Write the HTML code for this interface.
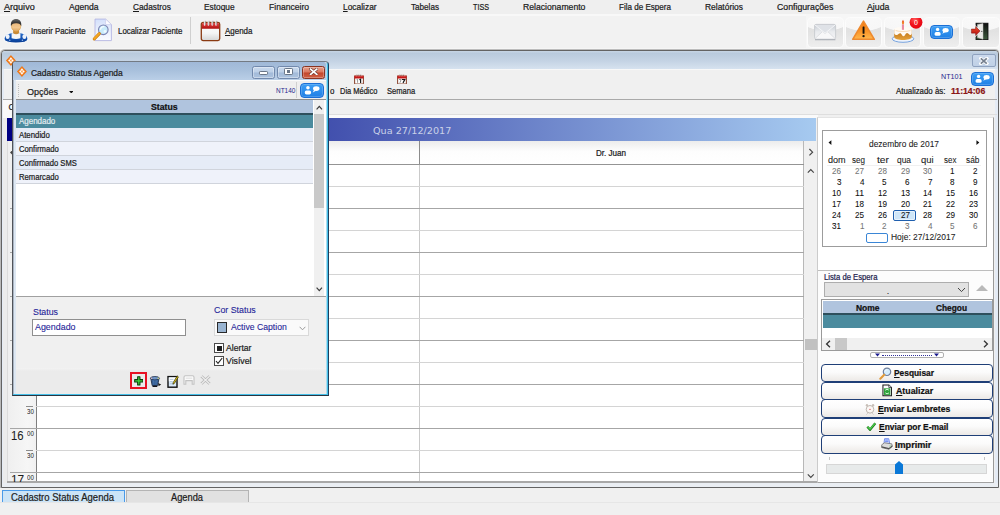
<!DOCTYPE html>
<html lang="pt-BR"><head><meta charset="utf-8"><title>Cadastro Status Agenda</title>
<style>
html,body{margin:0;padding:0}
body{width:1000px;height:515px;overflow:hidden;background:#f0f0f0;position:relative;font-family:"Liberation Sans",sans-serif;color:#1c1c1c}
div,span.t,svg,i{position:absolute;display:block;box-sizing:border-box}
.t{-webkit-text-stroke:0.22px currentColor;white-space:nowrap;line-height:12px;font-size:8px;transform-origin:0 0}
u{text-decoration:underline;text-underline-offset:1px;text-decoration-thickness:0.7px}
.hl{height:1px;left:36px;width:768px;background:#d4d4d4}
.hd{height:1px;left:36px;width:768px;background:#a6a6a6}
.tb{width:37px;height:31px;top:16.5px;border-radius:4.5px;background:radial-gradient(ellipse 90% 75% at 50% -30%,#fafafa 0%,#f7f7f7 97%,rgba(247,247,247,0) 100%),linear-gradient(#e6e6e6 0%,#e2e2e2 45%,#eeeeee 100%);border:1px solid #fcfcfc}
.chat{background:linear-gradient(#3d9ef4,#1f80e6);border:1px solid #1a6fd6;border-radius:4px;box-shadow:inset 0 0 0 1px rgba(255,255,255,.18)}
.row{left:16px;width:297px;height:14px;border-bottom:1px solid #d0d4dc}
.btn{left:821px;width:172px;border:1px solid #1f3f77;border-radius:4px;background:linear-gradient(#ffffff 0%,#fbfbfb 45%,#ece9e6 100%)}
.cb{width:10px;height:10px;left:214px;background:#fff;border:1px solid #4a4a4a}

</style></head>
<body>
<!-- menu / toolbar strips -->
<div style="left:0;top:0;width:1000px;height:15px;background:#efefef"></div>
<div style="left:0;top:15px;width:1000px;height:34px;background:#f2f2f2"></div>
<div style="left:0;top:14px;width:1000px;height:2px;background:#f8f8f8"></div>
<div style="left:0;top:47.5px;width:1000px;height:2px;background:#f6f6f6"></div>
<div style="left:190px;top:17px;width:1px;height:27px;background:#cfcfcf"></div>

<!-- toolbar icon: person -->
<svg style="left:3px;top:18px" width="26" height="26" viewBox="0 0 26 26">
 <defs>
  <linearGradient id="gskin" x1="0" y1="0" x2="0" y2="1"><stop offset="0" stop-color="#e9b477"/><stop offset=".6" stop-color="#f1c78f"/><stop offset="1" stop-color="#dba45e"/></linearGradient>
  <linearGradient id="gblue" x1="0" y1="0" x2="0" y2="1"><stop offset="0" stop-color="#2a6cc8"/><stop offset=".55" stop-color="#1252b2"/><stop offset="1" stop-color="#093a8e"/></linearGradient>
  <linearGradient id="ghair" x1="0" y1="0" x2="0" y2="1"><stop offset="0" stop-color="#6a6a6a"/><stop offset=".5" stop-color="#3a3a3a"/><stop offset="1" stop-color="#2a2622"/></linearGradient>
 </defs>
 <path d="M1 21 C1 17.2 4 15.3 8.2 14.8 L17.8 14.8 C22 15.3 25 17.2 25 21 C25 23.8 20 25.1 13 25.1 C6 25.1 1 23.8 1 21Z" fill="url(#gblue)" stroke="#fbfbfb" stroke-width="1.1"/>
 <ellipse cx="4.6" cy="18.6" rx="2" ry="2.5" fill="#edf2fa"/><ellipse cx="21.4" cy="18.6" rx="2" ry="2.5" fill="#edf2fa"/>
 <path d="M8.6 15.2 L17.4 15.2 L17.4 20.2 Q13 21.6 8.6 20.2Z" fill="#f6f6f6"/>
 <circle cx="6.8" cy="22.2" r=".7" fill="#9fc0ee"/><circle cx="19.4" cy="22.2" r=".7" fill="#9fc0ee"/>
 <path d="M10.4 11.6 L15.8 11.6 L16.2 15 Q13.1 17.6 10 15Z" fill="#c98b36"/>
 <path d="M8.5 8.4 C8.5 4.8 10.4 3.6 13.1 3.6 C15.8 3.6 17.7 4.8 17.7 8.4 C17.7 11.2 15.6 13.4 13.1 13.4 C10.6 13.4 8.5 11.2 8.5 8.4Z" fill="url(#gskin)" stroke="#d9952f" stroke-width=".5"/>
 <path d="M8 8.2 C7.2 3.2 10 .9 13.1 .9 C16.2 .9 19 3.2 18.2 8.2 C17.6 6.2 16.4 5.2 13.1 5.2 C9.8 5.2 8.6 6.2 8 8.2Z" fill="url(#ghair)"/>
</svg>
<!-- toolbar icon: doc + magnifier -->
<svg style="left:92px;top:18px" width="22" height="24" viewBox="0 0 22 24">
 <defs><linearGradient id="gdoc" x1="0" y1="0" x2="0" y2="1"><stop offset="0" stop-color="#d3e0fb"/><stop offset=".6" stop-color="#edf2fd"/><stop offset="1" stop-color="#fbfcff"/></linearGradient></defs>
 <path d="M3 1.1 L13.6 1.1 L19.4 6.6 L19.4 22.6 L3 22.6Z" fill="url(#gdoc)" stroke="#b4b6e2" stroke-width=".9"/>
 <path d="M13.6 1.1 L13.6 6.6 L19.4 6.6Z" fill="#fdfdff" stroke="#c4c6e6" stroke-width=".6"/>
 <circle cx="11.3" cy="11.8" r="4.8" fill="#c9ecfb" stroke="#7d83b2" stroke-width="1.1"/>
 <path d="M8.6 11.2 C8.8 9.4 10.2 8.4 11.8 8.6" fill="none" stroke="#f6fdff" stroke-width="1.3" stroke-linecap="round"/>
 <circle cx="13" cy="13.4" r="1.4" fill="#eefaff"/>
 <path d="M7.4 15.6 L2.2 21" stroke="#c87a10" stroke-width="3" stroke-linecap="round"/>
 <path d="M7.2 15.6 L2.3 20.7" stroke="#f4a722" stroke-width="2" stroke-linecap="round"/>
</svg>
<!-- toolbar icon: agenda calendar -->
<svg style="left:200px;top:18px" width="21" height="24" viewBox="0 0 21 24">
 <defs><linearGradient id="gred" x1="0" y1="0" x2="0" y2="1"><stop offset="0" stop-color="#e24a4a"/><stop offset="1" stop-color="#b00e0e"/></linearGradient>
 <linearGradient id="gpap" x1="0" y1="0" x2="0" y2="1"><stop offset="0" stop-color="#ffffff"/><stop offset=".6" stop-color="#f4f4f4"/><stop offset="1" stop-color="#d4d4d4"/></linearGradient></defs>
 <rect x="1.3" y="4.4" width="18.4" height="18.2" rx="1.8" fill="url(#gpap)" stroke="#8a3a12" stroke-width="1.3"/>
 <path d="M1.9 6 Q1.9 5 2.9 5 L18.1 5 Q19.1 5 19.1 6 L19.1 10.8 L1.9 10.8Z" fill="url(#gred)"/>
 <g stroke="#f2f2f2" stroke-width="1.5" stroke-linecap="round"><path d="M4.6 2.6v4.4M8.4 2.6v4.4M12.2 2.6v4.4M16 2.6v4.4"/></g>
 <g stroke="#8e8e8e" stroke-width=".7"><path d="M5.3 2.8v4.2M9.1 2.8v4.2M12.9 2.8v4.2M16.7 2.8v4.2"/></g>
</svg>

<!-- right toolbar buttons -->
<div style="left:805.5px;top:14px;width:195px;height:34.5px;background:#f6f6f6"></div>
<div class="tb" style="left:807px"></div>
<div class="tb" style="left:845px"></div>
<div class="tb" style="left:884px"></div>
<div class="tb" style="left:923px"></div>
<div class="tb" style="left:962px;width:38px"></div>
<!-- envelope -->
<svg style="left:813px;top:23px" width="24" height="18" viewBox="0 0 24 18">
 <defs><linearGradient id="genv" x1="0" y1="0" x2="0" y2="1"><stop offset="0" stop-color="#c4c9d1"/><stop offset=".5" stop-color="#e9ebee"/><stop offset="1" stop-color="#f4f5f6"/></linearGradient></defs>
 <rect x="1.6" y="1.4" width="21" height="14.6" rx="1.4" fill="url(#genv)" stroke="#c6c9ce" stroke-width=".9"/>
 <path d="M2 15.6 L9.4 8.6 L12.1 10.6 L14.8 8.6 L22.2 15.6" fill="#f8f8f9" stroke="#d2d4d8" stroke-width=".7"/>
 <path d="M1.9 1.9 L12.1 10.2 L22.3 1.9" fill="#dfe2e7" stroke="#f6f7f8" stroke-width=".9"/>
 <path d="M2 16.7 H22.4" stroke="#a9adb4" stroke-width="1.1"/>
</svg>
<!-- warning -->
<svg style="left:851px;top:19px" width="25" height="22" viewBox="0 0 25 22">
 <defs><linearGradient id="gw" x1="0" y1="0" x2="0" y2="1"><stop offset="0" stop-color="#f47a12"/><stop offset=".55" stop-color="#fb9426"/><stop offset="1" stop-color="#ffb84e"/></linearGradient></defs>
 <path d="M12.5 2.2 L23.3 20.3 L1.7 20.3Z" fill="url(#gw)" stroke="#ee8a2e" stroke-width="1.6" stroke-linejoin="round"/>
 <rect x="11.6" y="7.6" width="1.9" height="7.2" rx=".5" fill="#16120c"/><circle cx="12.55" cy="17.2" r="1.15" fill="#16120c"/>
</svg>
<!-- cake -->
<svg style="left:891px;top:18px" width="32" height="26" viewBox="0 0 32 26">
 <defs><linearGradient id="gck" x1="0" y1="0" x2="0" y2="1"><stop offset="0" stop-color="#b8690f"/><stop offset="1" stop-color="#e5a23a"/></linearGradient>
 <radialGradient id="gbd" cx=".4" cy=".3" r=".8"><stop offset="0" stop-color="#ff5a5a"/><stop offset=".5" stop-color="#f2121e"/><stop offset="1" stop-color="#e0000c"/></radialGradient></defs>
 <ellipse cx="12" cy="20.8" rx="10.8" ry="3.5" fill="#eef3fb" stroke="#6c9cdc" stroke-width=".9"/>
 <path d="M3.2 11.4 L3.2 19 C3.2 23 20.8 23 20.8 19 L20.8 11.4Z" fill="url(#gck)"/>
 <path d="M3.2 11.2 C3.2 8.2 20.8 8.2 20.8 11.2 L20.8 15.4 C20 17.4 18.6 17.6 17.2 15.6 C16 14.4 15 15.2 14 17 C13.2 18.6 11.8 18.6 11 17 C10 15 9 14.6 7.8 15.8 C6.4 17.4 4.6 17.6 3.2 15.4Z" fill="#fffaf3"/>
 <path d="M4.6 12.6 C8 13.8 16 13.8 19.4 12.6" fill="none" stroke="#f9dcb8" stroke-width="1.1"/>
 <rect x="10.9" y="6.4" width="2.1" height="5.4" fill="#ea8ba2"/>
 <path d="M12 1.8 C13.6 3.8 13.4 6.2 12 6.6 C10.6 6.2 10.4 3.8 12 1.8Z" fill="#ee5a1e"/><path d="M12 3.8 C12.7 4.8 12.6 6 12 6.3 C11.4 6 11.3 4.8 12 3.8Z" fill="#fbc23a"/>
 <circle cx="25" cy="4.3" r="6.4" fill="url(#gbd)"/>
</svg>
<!-- chat (toolbar) -->
<div class="chat" style="left:930px;top:25px;width:23px;height:14px"></div>
<svg style="left:930px;top:25px" width="23" height="14" viewBox="0 0 23 14">
 <circle cx="7.6" cy="4.4" r="1.7" fill="#fff"/><rect x="4.6" y="6.9" width="6" height="3.9" rx="1.6" fill="#fff"/>
 <ellipse cx="15.6" cy="5.2" rx="3.1" ry="2.2" fill="#fff"/><path d="M13.6 6.4 L12.2 8.8 L15.2 7.2Z" fill="#fff"/>
</svg>
<!-- exit door -->
<svg style="left:970px;top:22px" width="20" height="19" viewBox="0 0 20 19">
 <defs><linearGradient id="gdoor" x1="0" y1="0" x2="0" y2="1"><stop offset="0" stop-color="#101010"/><stop offset="1" stop-color="#3c5a3c"/></linearGradient>
 <linearGradient id="garr" x1="0" y1="0" x2="0" y2="1"><stop offset="0" stop-color="#f04a2a"/><stop offset="1" stop-color="#b01010"/></linearGradient></defs>
 <rect x="6" y="1.2" width="12" height="16.4" fill="url(#gdoor)" stroke="#0a0a0a" stroke-width=".8"/>
 <path d="M7.4 2.4 L13 1.6 L13 17.2 L7.4 15.6Z" fill="#e9e9e6" stroke="#bdbdb8" stroke-width=".5"/>
 <circle cx="11.8" cy="9.4" r=".6" fill="#444"/>
 <path d="M1.4 7 L5.6 7 L5.6 4.6 L10.2 9.1 L5.6 13.6 L5.6 11.2 L1.4 11.2Z" fill="url(#garr)" stroke="#fff" stroke-width="1.4" paint-order="stroke"/>
 <path d="M1.4 7 L5.6 7 L5.6 4.6 L10.2 9.1 L5.6 13.6 L5.6 11.2 L1.4 11.2Z" fill="none" stroke="#6a0c0c" stroke-width=".5"/>
</svg>

<!-- MDI frame -->
<div style="left:1px;top:50px;width:998px;height:438px;border:1px solid #636363;border-radius:4px 4px 0 0;background:#f0f0f0;box-shadow:0 -1px 0 0 #bdbdbd,-1px 0 0 0 #b9b9b9,inset 0 -1px 0 0 #c9c9c9, inset -1px 0 0 0 #d4d4d4">
</div>
<!-- Agenda child window -->
<div style="left:2px;top:51px;width:996px;height:18px;background:linear-gradient(#c7d5e5 0,#b9cadd 14%,#c4d3e4 55%,#d6e2ef 100%);border-radius:3px 3px 0 0"></div>
<div style="left:4px;top:69px;width:991px;height:1px;background:#f8f8f8"></div>
<div style="left:2px;top:69px;width:2px;height:418px;background:#e4ebf5"></div>
<div style="left:995px;top:69px;width:3px;height:418px;background:#e4ebf5"></div>
<div style="left:3px;top:99px;width:994px;height:1px;background:#a9a9a9"></div>
<div style="left:3px;top:114px;width:994px;height:1px;background:#dedede"></div>
<div style="left:4px;top:115px;width:814px;height:3px;background:#fafafa"></div>
<div style="left:3px;top:100px;width:10px;height:18px;background:#f9f9f9"></div>
<!-- agenda window icon -->
<svg style="left:6.1px;top:54.9px" width="9.8" height="11" viewBox="0 0 10 11">
 <path d="M5 .7 L9.4 5.5 L5 10.3 L.6 5.5Z" fill="#f58a30" stroke="#ee7414" stroke-width="1.1" stroke-linejoin="round"/>
 <path d="M5 2.2 L6.3 3.9 L5 5 L3.7 3.9Z M5 8.8 L6.3 7.1 L5 6 L3.7 7.1Z M2.2 5.5 L3.5 4.3 L4.5 5.5 L3.5 6.7Z M7.8 5.5 L6.5 4.3 L5.5 5.5 L6.5 6.7Z" fill="#fff"/>
</svg>
<!-- agenda close button -->
<div style="left:972px;top:54px;width:24px;height:13px;border:1px solid #8fa2bf;border-radius:2px;background:linear-gradient(#cbd9ec,#bfd0e6)"></div>
<svg style="left:979.2px;top:56.6px" width="9.6" height="8" viewBox="0 0 9.6 8">
 <path d="M1.8 1.4 L7.8 6.6 M7.8 1.4 L1.8 6.6" stroke="#fdfdfd" stroke-width="3.3" stroke-linecap="square"/>
 <path d="M1.8 1.4 L7.8 6.6 M7.8 1.4 L1.8 6.6" stroke="#76808f" stroke-width="1.7" stroke-linecap="butt"/>
</svg>
<!-- agenda toolbar chat icon -->
<div class="chat" style="left:971px;top:72px;width:23px;height:14px"></div>
<svg style="left:971px;top:72px" width="23" height="14" viewBox="0 0 23 14">
 <circle cx="7.6" cy="4.4" r="1.7" fill="#fff"/><rect x="4.6" y="6.9" width="6" height="3.9" rx="1.6" fill="#fff"/>
 <ellipse cx="15.6" cy="5.2" rx="3.1" ry="2.2" fill="#fff"/><path d="M13.6 6.4 L12.2 8.8 L15.2 7.2Z" fill="#fff"/>
</svg>
<!-- small calendar icons: Dia Medico, Semana -->
<svg style="left:354px;top:73.6px" width="10" height="10.6" viewBox="0 0 10 10.6">
 <rect x=".6" y="1.8" width="8.8" height="8.2" rx=".8" fill="#ffffff" stroke="#8c4a36" stroke-width="1.1"/><rect x=".5" y="1.6" width="9" height="2.9" fill="#c61616"/>
 <path d="M2.2 .4 v2 M4.1 .4 v2 M6 .4 v2 M7.9 .4 v2" stroke="#f2e6e0" stroke-width=".9"/><path d="M2.9 .6 v1.4 M4.8 .6 v1.4 M6.7 .6 v1.4" stroke="#5a2a20" stroke-width=".5"/>
 <path d="M2.6 5.6 L3.6 5.2 L3.6 8.8" fill="none" stroke="#8a8a8a" stroke-width=".9"/><path d="M5.4 5.8 L6.6 5.2 L6.6 8.9" fill="none" stroke="#1a1a1a" stroke-width="1.2"/>
</svg>
<svg style="left:397px;top:73.6px" width="10" height="10.6" viewBox="0 0 10 10.6">
 <rect x=".6" y="1.8" width="8.8" height="8.2" rx=".8" fill="#ffffff" stroke="#8c4a36" stroke-width="1.1"/><rect x=".5" y="1.6" width="9" height="2.9" fill="#c61616"/>
 <path d="M2.2 .4 v2 M4.1 .4 v2 M6 .4 v2 M7.9 .4 v2" stroke="#f2e6e0" stroke-width=".9"/><path d="M2.9 .6 v1.4 M4.8 .6 v1.4 M6.7 .6 v1.4" stroke="#5a2a20" stroke-width=".5"/>
 <path d="M2 5.5 L4.2 5.5 L2.9 8.8" fill="none" stroke="#8a8a8a" stroke-width=".9"/><path d="M5 5.5 L7.8 5.5 L6 8.9" fill="none" stroke="#1a1a1a" stroke-width="1.2"/>
</svg>

<!-- agenda left gutter -->
<div style="left:3px;top:118px;width:4px;height:365px;background:#ececec"></div>
<!-- date header -->
<div style="left:7px;top:118px;width:809px;height:23px;background:linear-gradient(90deg,#000082,#a6caf0)"></div>
<!-- grid body -->
<div style="left:7px;top:141px;width:797px;height:341px;background:#fff"></div>
<!-- doctor header -->
<div style="left:36px;top:141px;width:768px;height:23px;background:linear-gradient(#ececec,#fdfdfd 45%,#fff)"></div>
<!-- time column -->
<div style="left:7px;top:141px;width:29px;height:341px;background:linear-gradient(90deg,#efefef,#f6f6f6 70%,#f1f1f1);border-left:1px solid #dcdcdc"></div>
<div style="left:36px;top:141px;width:1px;height:341px;background:#7e7e7e"></div>
<div style="left:419px;top:141px;width:1px;height:341px;background:linear-gradient(#8c8c8c 0,#8c8c8c 23px,#cacaca 23px)"></div>
<div style="left:803px;top:141px;width:1px;height:341px;background:#b8b8b8"></div>
<svg style="left:9.6px;top:150px" width="2.6" height="5" viewBox="0 0 2.6 5"><path d="M2.6 0 L0 2.5 L2.6 5Z" fill="#444"/></svg>
<!-- horizontal lines -->
<div class="hd" style="top:164px;background:#949494"></div>
<div class="hl" style="top:186px"></div><div class="hd" style="top:208px;left:10px;width:794px"></div>
<div class="hl" style="top:230px"></div><div class="hd" style="top:252px;left:10px;width:794px"></div>
<div class="hl" style="top:274px"></div><div class="hd" style="top:296px;left:10px;width:794px"></div>
<div class="hl" style="top:318px"></div><div class="hd" style="top:340px;left:10px;width:794px"></div>
<div class="hl" style="top:362px"></div><div class="hd" style="top:384px;left:10px;width:794px"></div>
<div class="hl" style="top:406px"></div><div class="hd" style="top:428px;left:10px;width:794px"></div>
<div class="hl" style="top:450px"></div><div class="hd" style="top:472px;left:10px;width:794px"></div>
<div style="left:26px;top:406px;width:7px;height:1px;background:#8c8c8c"></div>
<div style="left:26px;top:450px;width:7px;height:1px;background:#8c8c8c"></div>
<!-- agenda vertical scrollbar -->
<div style="left:804px;top:141px;width:13px;height:341px;background:#f0f0f0"></div>
<div style="left:805px;top:339px;width:12px;height:11px;background:#c1c1c1"></div>
<svg style="left:805px;top:146px" width="12" height="12" viewBox="0 0 12 12"><path d="M4.4 3 L7.6 6.2 L4.4 9.4" fill="none" stroke="#454545" stroke-width="1.15"/></svg>
<svg style="left:805px;top:165px" width="12" height="12" viewBox="0 0 12 12"><path d="M2.8 7.6 L5.8 4.6 L8.8 7.6" fill="none" stroke="#454545" stroke-width="1.15"/></svg>
<svg style="left:805px;top:470px" width="12" height="12" viewBox="0 0 12 12"><path d="M2.8 4.4 L5.8 7.4 L8.8 4.4" fill="none" stroke="#454545" stroke-width="1.15"/></svg>
<!-- agenda bottom strip -->
<div style="left:7px;top:481.4px;width:813px;height:1.3px;background:#a8a8a8"></div>
<div style="left:2px;top:483px;width:996px;height:4px;background:#eaeef3"></div>

<!-- right panel -->
<div style="left:817px;top:117px;width:177px;height:365.6px;background:#fff;border-left:1px solid #cbcbcb;border-right:1.3px solid #9a9a9a;border-bottom:1.3px solid #a2a2a2;border-top:1px solid #e4e4e4"></div>
<div style="left:818px;top:271px;width:174.6px;height:210.2px;background:#fcfcfc"></div>
<div style="left:818px;top:270px;width:175px;height:1px;background:#bdbdbd"></div>
<!-- calendar -->
<div style="left:822px;top:130px;width:165.4px;height:117px;border:1px solid #9c9c9c;background:#fff"></div>
<svg style="left:828.3px;top:140px" width="3.8" height="5.2" viewBox="0 0 5 7"><path d="M4.5 0.3 L0.6 3.5 L4.5 6.7Z" fill="#111"/></svg>
<svg style="left:976.2px;top:140px" width="3.8" height="5.2" viewBox="0 0 5 7"><path d="M0.5 0.3 L4.4 3.5 L0.5 6.7Z" fill="#111"/></svg>
<div style="left:827px;top:165px;width:154px;height:1px;background:#f0f0f0"></div>
<div style="left:893px;top:210px;width:23px;height:11px;border:1px solid #1f5fae;border-radius:2px;background:#cfe6f8;box-shadow:inset 0 0 0 1px #e8f3fc"></div>
<div style="left:866px;top:233px;width:22px;height:10px;border:1px solid #3a86d6;border-radius:2px;background:#fff"></div>
<!-- lista de espera -->
<div style="left:824px;top:282px;width:145px;height:15px;border:1px solid #adadad;background:#e2e2e2"></div>
<svg style="left:957px;top:287px" width="9" height="6" viewBox="0 0 9 6"><path d="M1 1 L4.5 4.6 L8 1" fill="none" stroke="#444" stroke-width="1"/></svg>
<svg style="left:976px;top:285px" width="12" height="6" viewBox="0 0 12 6"><path d="M6 0 L12 6 L0 6Z" fill="#b9b9b9"/></svg>
<!-- waiting grid -->
<div style="left:821px;top:299px;width:172px;height:52px;border:1px solid #9a9a9a;background:#fff"></div>
<div style="left:823px;top:301px;width:169px;height:12px;background:#b0c4de"></div>
<div style="left:823px;top:313px;width:169px;height:2px;background:#2e4f5c"></div>
<div style="left:823px;top:315px;width:169px;height:13px;background:#4b8b9e"></div>
<div style="left:822px;top:338px;width:170px;height:12px;background:#f0f0f0"></div>
<div style="left:835px;top:338px;width:12px;height:12px;background:#c8c8c8"></div>
<svg style="left:825px;top:340px" width="7" height="8" viewBox="0 0 7 8"><path d="M5 0.8 L1.6 4 L5 7.2" fill="none" stroke="#333" stroke-width="1.3"/></svg>
<svg style="left:982px;top:340px" width="7" height="8" viewBox="0 0 7 8"><path d="M2 0.8 L5.4 4 L2 7.2" fill="none" stroke="#333" stroke-width="1.3"/></svg>
<!-- splitter handle -->
<div style="left:870px;top:352px;width:74px;height:6px;border:1px solid #b0b0b0;border-radius:2px;background:#fff"></div>
<div style="left:882px;top:355px;width:50px;height:0;border-top:1px dotted #30309a"></div>
<svg style="left:875px;top:353px" width="5" height="4" viewBox="0 0 5 4"><path d="M0 .5 L5 .5 L2.5 3.6Z" fill="#1a1a8c"/></svg>
<svg style="left:934px;top:353px" width="5" height="4" viewBox="0 0 5 4"><path d="M0 .5 L5 .5 L2.5 3.6Z" fill="#1a1a8c"/></svg>
<!-- buttons -->
<div class="btn" style="top:364px;height:18px"></div>
<div class="btn" style="top:381.6px;height:18.4px"></div>
<div class="btn" style="top:399.4px;height:18.8px"></div>
<div class="btn" style="top:417.8px;height:18px"></div>
<div class="btn" style="top:435.4px;height:18.2px"></div>
<!-- button icons -->
<svg style="left:879px;top:367px" width="13" height="13" viewBox="0 0 13 13">
 <circle cx="8" cy="4.8" r="3.7" fill="#d4ecfc" stroke="#6f7f9c" stroke-width="1.2"/><path d="M6 4.4 C6.2 3.2 7.2 2.6 8.4 2.8" fill="none" stroke="#fff" stroke-width=".9"/><path d="M5.2 7.8 L1.3 11.8" stroke="#e09a3a" stroke-width="2" stroke-linecap="round"/>
</svg>
<svg style="left:882.4px;top:384.3px" width="10.4" height="12.6" viewBox="0 0 11 13">
 <path d="M1 .8 L7.2 .8 L10 3.6 L10 12.2 L1 12.2Z" fill="#fdfdfd" stroke="#1c1c1c" stroke-width="1.1"/>
 <path d="M7.2 .8 L7.2 3.6 L10 3.6" fill="#dfe6f5" stroke="#1c1c1c" stroke-width=".7"/>
 <rect x="2" y="4.4" width="6.8" height="7" fill="#2fa33c"/>
 <path d="M3.4 6.6 C4 5.4 6.6 5.2 7.2 6.4 M7.4 9 C6.8 10.2 4.2 10.4 3.6 9.2" fill="none" stroke="#e9ffe9" stroke-width="1"/>
</svg>
<svg style="left:864.5px;top:403px" width="10" height="11.8" viewBox="0 0 12 14">
 <circle cx="6" cy="7.5" r="4.6" fill="#fbf7f4" stroke="#b8b0a8" stroke-width="1.1"/><circle cx="2.3" cy="2.6" r="1.4" fill="#c8c0b8"/><circle cx="9.7" cy="2.6" r="1.4" fill="#c8c0b8"/>
 <circle cx="6" cy="7.5" r=".8" fill="#d04040"/><path d="M3 12.5 L2 13.6 M9 12.5 L10 13.6" stroke="#b0a8a0" stroke-width="1"/>
</svg>
<svg style="left:866.4px;top:422.3px" width="10.6" height="8.8" viewBox="0 0 12 11"><path d="M1 6 L4.4 9.6 L11 1.6" fill="none" stroke="#1e7a1e" stroke-width="3"/><path d="M1.3 6 L4.4 9 L10.6 1.8" fill="none" stroke="#4ed24e" stroke-width="1.4"/></svg>
<svg style="left:880.7px;top:438.3px" width="12" height="12" viewBox="0 0 14 14">
 <path d="M4.2 .8 L9 .8 L10.2 6.4 L3.4 6.4Z" fill="#cfdcff" stroke="#5a78e8" stroke-width=".9"/>
 <path d="M5 2.4 H8 M4.8 4 H8.6" stroke="#4a6af0" stroke-width=".8"/>
 <path d="M.8 8 L4 5.6 L12.6 6.8 L13.2 10 L9.2 13.2 L.8 11.2Z" fill="#dcdcdc" stroke="#6e6e6e" stroke-width=".9"/>
 <path d="M.8 9.6 L9.2 11.6 L13.2 8.6 L13.2 10 L9.2 13.2 L.8 11.2Z" fill="#4e4e4e"/>
 <circle cx="10.6" cy="9.2" r=".6" fill="#6fe06f"/>
</svg>
<!-- slider -->
<div style="left:829px;top:457px;width:1px;height:3px;background:#c4c4c4"></div>
<div style="left:984px;top:457px;width:1px;height:3px;background:#c4c4c4"></div>
<div style="left:826px;top:464px;width:161px;height:10px;background:#e7eaea;border:1px solid #d6d6d6"></div>
<svg style="left:895px;top:461px" width="8" height="13" viewBox="0 0 8 13"><path d="M0 3.6 L4 0 L8 3.6 L8 13 L0 13Z" fill="#0a78d7"/></svg>

<!-- bottom tabs -->
<div style="left:0;top:488px;width:1000px;height:27px;background:#f0f0f0"></div>
<div style="left:2px;top:490px;width:123px;height:14px;background:#cce4f7;border:1px solid #4a9ae8;border-bottom:none"></div>
<div style="left:126px;top:490px;width:123px;height:14px;background:#e1e1e1;border:1px solid #b4b4b4;border-bottom:none"></div>
<div style="left:0;top:502.7px;width:1000px;height:12.3px;background:#f0f0f0"></div>
<div style="left:0;top:502px;width:1000px;height:1px;background:#e6e6e6"></div>

<!-- ============ Dialog: Cadastro Status Agenda ============ -->
<div style="left:12px;top:61px;width:317px;height:335px;border-radius:4px 4px 0 0;background:#f0f0f0;border-top:1px solid #737a83;border-left:1px solid #505359;border-right:1px solid #1d3f5e;border-bottom:1px solid #2a3540;box-shadow:inset -1px -1px 0 0 #45bfe8,inset -2px -2px 0 0 #a9dcef"></div>
<div style="left:13px;top:62px;width:313px;height:18px;border-radius:2px 2px 0 0;background:linear-gradient(#a0b8d7 0%,#a8c0dc 45%,#bacfe7 100%)"></div>
<svg style="left:17.1px;top:66.1px" width="9.9" height="11" viewBox="0 0 10 11">
 <path d="M5 .7 L9.4 5.5 L5 10.3 L.6 5.5Z" fill="#f58a30" stroke="#ee7414" stroke-width="1.1" stroke-linejoin="round"/>
 <path d="M5 2.2 L6.3 3.9 L5 5 L3.7 3.9Z M5 8.8 L6.3 7.1 L5 6 L3.7 7.1Z M2.2 5.5 L3.5 4.3 L4.5 5.5 L3.5 6.7Z M7.8 5.5 L6.5 4.3 L5.5 5.5 L6.5 6.7Z" fill="#fff"/>
</svg>
<!-- caption buttons -->
<div style="left:252px;top:65.5px;width:23px;height:13px;border:1px solid #7289ad;border-radius:2.5px;background:linear-gradient(#c9d9ed 0%,#bccfe7 48%,#a2bad9 52%,#adc3df 100%);box-shadow:inset 0 0 0 1px rgba(255,255,255,.35)"></div>
<div style="left:277.4px;top:65.5px;width:22.6px;height:13px;border:1px solid #7289ad;border-radius:2.5px;background:linear-gradient(#c9d9ed 0%,#bccfe7 48%,#a2bad9 52%,#adc3df 100%);box-shadow:inset 0 0 0 1px rgba(255,255,255,.35)"></div>
<div style="left:302.2px;top:65.5px;width:23px;height:13px;border:1px solid #8a3422;border-radius:2.5px;background:linear-gradient(#e6a08c 0%,#d9755c 48%,#c2452b 52%,#cf6246 100%);box-shadow:inset 0 0 0 1px rgba(255,255,255,.25)"></div>
<div style="left:259.4px;top:71px;width:8.2px;height:3.8px;background:#fff;border:1px solid #6a7688;border-radius:1.2px"></div>
<div style="left:284.2px;top:68.4px;width:8.6px;height:6.4px;background:#fff;border:1px solid #6a7688;border-radius:1.2px"></div>
<div style="left:286.6px;top:70.4px;width:3.8px;height:2.2px;background:#6a7688"></div>
<svg style="left:308.6px;top:67.6px" width="9.4" height="7.6" viewBox="0 0 9.4 7.6">
 <path d="M1.6 1.2 L7.8 6.4 M7.8 1.2 L1.6 6.4" stroke="#6a3a30" stroke-width="3" stroke-linecap="square"/>
 <path d="M1.6 1.2 L7.8 6.4 M7.8 1.2 L1.6 6.4" stroke="#fff" stroke-width="1.7" stroke-linecap="square"/>
</svg>
<div style="left:13px;top:80px;width:3px;height:314px;background:linear-gradient(90deg,#a9b4c2 0,#a9b4c2 1px,#dde7f2 1px)"></div>
<!-- dialog toolbar -->
<div style="left:16px;top:80px;width:310px;height:19px;background:linear-gradient(#fbfbfb 0,#fbfbfb 1px,#efefef 1px)"></div>
<div style="left:18.3px;top:83.6px;width:0;height:13px;border-left:1.5px dotted #bdbdbd"></div>
<svg style="left:68.7px;top:90.7px" width="4.6" height="2.6" viewBox="0 0 5 3"><path d="M0 0 L5 0 L2.5 3Z" fill="#111"/></svg>
<div style="left:296px;top:82px;width:1px;height:16px;background:#d0d0d0"></div>
<div class="chat" style="left:300px;top:83px;width:24px;height:15px"></div>
<svg style="left:300px;top:83px" width="24" height="15" viewBox="0 0 23 14">
 <circle cx="7.6" cy="4.4" r="1.7" fill="#fff"/><rect x="4.6" y="6.9" width="6" height="3.9" rx="1.6" fill="#fff"/>
 <ellipse cx="15.6" cy="5.2" rx="3.1" ry="2.2" fill="#fff"/><path d="M13.6 6.4 L12.2 8.8 L15.2 7.2Z" fill="#fff"/>
</svg>
<div style="left:16px;top:99px;width:310px;height:1px;background:#8e8e8e"></div>
<!-- dialog grid -->
<div style="left:16px;top:100px;width:310px;height:197px;background:#fff;border-bottom:1px solid #a0a0a0"></div>
<div style="left:16px;top:100px;width:297px;height:13px;background:#b0c4de"></div>
<div style="left:16px;top:113px;width:297px;height:2px;background:#2e4f5c"></div>
<div style="left:16px;top:115px;width:297px;height:13px;background:#4b8b9e"></div>
<div class="row" style="top:128px;background:#e6ecf7"></div>
<div class="row" style="top:142px;background:#eff2fa"></div>
<div class="row" style="top:156px;background:#e6ecf7"></div>
<div class="row" style="top:170px;background:#eff2fa"></div>
<!-- dialog grid scrollbar -->
<div style="left:314px;top:100px;width:10.4px;height:196px;background:#f0f0f0"></div>
<div style="left:314.3px;top:114px;width:10px;height:94px;background:#c9c9c9"></div>
<svg style="left:315px;top:104px" width="9" height="7" viewBox="0 0 9 7"><path d="M1.6 5.4 L4.3 2.4 L7 5.4" fill="none" stroke="#3a3a3a" stroke-width="1.15"/></svg>
<svg style="left:315px;top:286px" width="9" height="7" viewBox="0 0 9 7"><path d="M1.6 1.6 L4.3 4.6 L7 1.6" fill="none" stroke="#3a3a3a" stroke-width="1.15"/></svg>
<!-- form -->
<div style="left:32px;top:319px;width:154px;height:17px;background:#fff;border:1px solid #8f8f8f"></div>
<div style="left:214px;top:319px;width:95px;height:17px;background:#fafafa;border:1px solid #d9d9d9"></div>
<div style="left:217px;top:322px;width:10px;height:11px;background:#99b4d1;border:1px solid #2a2a2a"></div>
<svg style="left:299px;top:326px" width="7" height="5" viewBox="0 0 7 5"><path d="M.6 .8 L3.5 3.8 L6.4 .8" fill="none" stroke="#9a9a9a" stroke-width="1"/></svg>
<div class="cb" style="top:343px"></div><div style="left:216.5px;top:345.5px;width:5px;height:5px;background:#1e1e1e"></div>
<div class="cb" style="top:356px"></div>
<svg style="left:215px;top:357px" width="8" height="8" viewBox="0 0 8 8"><path d="M1 4 L3 6.4 L7.2 1" fill="none" stroke="#222" stroke-width="1.1"/></svg>
<!-- dialog bottom toolbar -->
<div style="left:16px;top:368px;width:310px;height:26px;background:linear-gradient(#f3f3f3,#ebebeb 12%,#ebebeb)"></div>
<div style="left:130px;top:372px;width:17px;height:17px;border:2px solid #e81224"></div>
<svg style="left:133.8px;top:376px" width="9.6" height="9.6" viewBox="0 0 10 10"><path d="M3.8 .7 H6.2 V3.8 H9.3 V6.2 H6.2 V9.3 H3.8 V6.2 H.7 V3.8 H3.8Z" fill="#3bd23b" stroke="#0c3c0c" stroke-width="1.1" stroke-linejoin="round"/></svg>
<svg style="left:148.5px;top:374.5px" width="13" height="13" viewBox="0 0 13 13">
 <path d="M1.8 3.4 L10 3.4 L8.6 10.6 Q5.9 12.4 3.2 10.6Z" fill="#4674ac" stroke="#1c2c48" stroke-width=".9"/>
 <ellipse cx="5.9" cy="3.2" rx="4.5" ry="1.7" fill="#7096c8" stroke="#1c2c48" stroke-width=".8"/>
 <path d="M3.4 5.4 L4 9.8 M5.9 5.6 L5.9 10.2 M8.4 5.4 L7.8 9.8" stroke="#2c4f82" stroke-width=".7"/>
 <ellipse cx="5.9" cy="11.2" rx="2.6" ry=".9" fill="#14141c"/>
 <path d="M9 8 L12.2 9.4 L9.6 11.2Z" fill="#1a1a1a"/>
 <circle cx="2.6" cy="3.3" r=".7" fill="#f0b0b0"/><circle cx="9.2" cy="3.3" r=".7" fill="#f0e060"/>
</svg>
<svg style="left:167px;top:374.5px" width="12" height="13" viewBox="0 0 12 13">
 <rect x="1" y="1.6" width="9" height="10.6" fill="#dbeaf8" stroke="#111" stroke-width="1.4"/><rect x="1.8" y="2.4" width="7.4" height="4" fill="#fdfdfd"/>
 <path d="M2.8 4.4 H6.4 M2.8 6.6 H5.6 M2.8 8.8 H7" stroke="#9ab4cf" stroke-width=".7"/>
 <path d="M10.2 .9 L11.4 1.9 L7.4 8.4 L5.9 9.2 L6.2 7.6Z" fill="#f0d21c" stroke="#2a2606" stroke-width=".7" stroke-linejoin="round"/>
</svg>
<svg style="left:183px;top:375px" width="12" height="10" viewBox="0 0 12 10">
 <path d="M1 2.2 Q1 .8 2.4 .8 L9.6 .8 Q11 .8 11 2.2 L11 9.2 L9.2 9.2 L9.2 5.6 L2.8 5.6 L2.8 9.2 L1 9.2Z" fill="#fafafa" stroke="#c2c2c2" stroke-width="1.1"/>
 <path d="M2.8 3.2 H9.2" stroke="#dcdcdc" stroke-width="1"/>
</svg>
<svg style="left:200px;top:375px" width="11" height="10" viewBox="0 0 11 10">
 <path d="M1.4 1.2 L9.6 8.8 M9.6 1.2 L1.4 8.8" stroke="#bababa" stroke-width="2.9"/><path d="M1.4 1.2 L9.6 8.8 M9.6 1.2 L1.4 8.8" stroke="#f4f4f4" stroke-width="1.1"/>
</svg>

<span id="m1" class="t" style="left:4.3px;top:1px;font-size:8.7px;transform:scaleX(1.042);"><u>A</u>rquivo</span>
<span id="m2" class="t" style="left:69.0px;top:1px;font-size:8.7px;transform:scaleX(0.988);">Agenda</span>
<span id="m3" class="t" style="left:132.6px;top:1px;font-size:8.7px;transform:scaleX(0.954);"><u>C</u>adastros</span>
<span id="m4" class="t" style="left:204.4px;top:1px;font-size:8.7px;transform:scaleX(0.959);">Estoque</span>
<span id="m5" class="t" style="left:269.0px;top:1px;font-size:8.7px;transform:scaleX(0.986);">Financeiro</span>
<span id="m6" class="t" style="left:343.0px;top:1px;font-size:8.7px;transform:scaleX(0.966);"><u>L</u>ocalizar</span>
<span id="m7" class="t" style="left:411.0px;top:1px;font-size:8.7px;transform:scaleX(0.935);">Tabelas</span>
<span id="m8" class="t" style="left:473.0px;top:1px;font-size:8.7px;transform:scaleX(0.828);">TISS</span>
<span id="m9" class="t" style="left:522.6px;top:1px;font-size:8.7px;transform:scaleX(0.994);">Relacionamento</span>
<span id="m10" class="t" style="left:619.0px;top:1px;font-size:8.7px;transform:scaleX(0.928);">Fila de Espera</span>
<span id="m11" class="t" style="left:705.0px;top:1px;font-size:8.7px;transform:scaleX(0.971);">Relatórios</span>
<span id="m12" class="t" style="left:776.6px;top:1px;font-size:8.7px;transform:scaleX(1.006);">Configurações</span>
<span id="m13" class="t" style="left:866.6px;top:1px;font-size:8.7px;transform:scaleX(1.008);"><u>A</u>juda</span>
<span id="tb1" class="t" style="left:30.5px;top:26px;font-size:8.2px;transform:scaleX(0.958);">Inserir Paciente</span>
<span id="tb2" class="t" style="left:118.0px;top:26px;font-size:8.2px;transform:scaleX(0.962);">Localizar Paciente</span>
<span id="tb3" class="t" style="left:225.0px;top:26px;font-size:8.2px;transform:scaleX(0.970);"><u>A</u>genda</span>
<span id="badge" class="t" style="left:914.0px;top:17px;font-size:7.7px;transform:scaleX(0.911);color:#fff;-webkit-text-stroke:0;">0</span>
<span id="ag0" class="t" style="left:329.6px;top:86px;font-size:8.2px;transform:scaleX(0.965);">o</span>
<span id="ag1" class="t" style="left:340.2px;top:86px;font-size:8.2px;transform:scaleX(0.911);">Dia Médico</span>
<span id="ag2" class="t" style="left:386.8px;top:86px;font-size:8.2px;transform:scaleX(0.924);">Semana</span>
<span id="nt101" class="t" style="left:941.0px;top:71px;font-size:7.7px;transform:scaleX(0.931);color:#26268e;-webkit-text-stroke:0;">NT101</span>
<span id="atu" class="t" style="left:895.8px;top:86px;font-size:8.2px;transform:scaleX(0.961);">Atualizado às:</span>
<span id="hora" class="t" style="left:950.8px;top:86px;font-size:8.2px;transform:scaleX(1.058);color:#8a1515;font-weight:bold;">11:14:06</span>
<span id="cpeek" class="t" style="left:8.4px;top:102px;font-size:8.2px;width:3.8px;overflow:hidden;">C</span>
<span id="dtitle" class="t" style="left:31.0px;top:67px;font-size:8.9px;transform:scaleX(0.954);">Cadastro Status Agenda</span>
<span id="opc" class="t" style="left:27.0px;top:86px;font-size:9.8px;transform:scaleX(0.918);">Opções</span>
<span id="nt140" class="t" style="left:275.6px;top:85px;font-size:7.5px;transform:scaleX(0.861);color:#26268e;-webkit-text-stroke:0;">NT140</span>
<span id="gh" class="t" style="left:151.0px;top:102px;font-size:8.2px;transform:scaleX(1.063);font-weight:bold;color:#111;">Status</span>
<span id="r1" class="t" style="left:19.2px;top:115px;font-size:8.3px;transform:scaleX(0.959);color:#e2ebf0;">Agendado</span>
<span id="r2" class="t" style="left:19.2px;top:129px;font-size:8.3px;transform:scaleX(0.940);">Atendido</span>
<span id="r3" class="t" style="left:19.2px;top:143px;font-size:8.3px;transform:scaleX(0.928);">Confirmado</span>
<span id="r4" class="t" style="left:19.2px;top:157px;font-size:8.3px;transform:scaleX(0.915);">Confirmado SMS</span>
<span id="r5" class="t" style="left:19.2px;top:171px;font-size:8.3px;transform:scaleX(0.928);">Remarcado</span>
<span id="lst" class="t" style="left:32.5px;top:306px;font-size:9px;transform:scaleX(0.980);color:#1f1f98;-webkit-text-stroke:0.1px currentColor;">Status</span>
<span id="inp" class="t" style="left:34.5px;top:321px;font-size:9px;transform:scaleX(0.987);color:#1f1f98;-webkit-text-stroke:0.1px currentColor;">Agendado</span>
<span id="lcor" class="t" style="left:214.1px;top:304px;font-size:9px;transform:scaleX(0.983);color:#1f1f98;-webkit-text-stroke:0.1px currentColor;">Cor Status</span>
<span id="acap" class="t" style="left:231.1px;top:321px;font-size:9px;transform:scaleX(0.961);color:#1f1f98;-webkit-text-stroke:0.1px currentColor;">Active Caption</span>
<span id="alr" class="t" style="left:225.7px;top:342px;font-size:9px;transform:scaleX(0.962);">Alertar</span>
<span id="vis" class="t" style="left:225.7px;top:355px;font-size:9px;transform:scaleX(0.968);">Visível</span>
<span id="qua" class="t" style="left:372.8px;top:125px;font-size:9.2px;transform:scaleX(1.051);font-family:'DejaVu Sans','Liberation Sans',sans-serif;color:#c9d1e8;-webkit-text-stroke:0;">Qua 27/12/2017</span>
<span id="dr" class="t" style="left:595.8px;top:148px;font-size:8.2px;transform:scaleX(0.983);">Dr. Juan</span>
<span id="h16" class="t" style="left:11.0px;top:428px;font-size:11.9px;line-height:16px;transform:scaleX(0.952);-webkit-text-stroke:0.05px currentColor;">16</span>
<span id="h16m" class="t" style="left:26.6px;top:428px;font-size:6.3px;transform:scaleX(0.969);-webkit-text-stroke:0;color:#1a1a1a;">00</span>
<span id="h1630" class="t" style="left:26.6px;top:406px;font-size:6.3px;transform:scaleX(0.969);-webkit-text-stroke:0;color:#1a1a1a;">30</span>
<span id="h1630b" class="t" style="left:26.6px;top:450px;font-size:6.3px;transform:scaleX(0.969);-webkit-text-stroke:0;color:#1a1a1a;">30</span>
<span id="h17" class="t" style="left:11.0px;top:472px;font-size:11.9px;line-height:16px;height:10px;overflow:hidden;-webkit-text-stroke:0.05px currentColor;">17</span>
<span id="h17m" class="t" style="left:26.6px;top:472px;font-size:6.3px;transform:scaleX(0.969);-webkit-text-stroke:0;color:#1a1a1a;">00</span>
<span id="cmon" class="t" style="left:869.0px;top:138px;font-size:8.9px;transform:scaleX(0.946);-webkit-text-stroke:0.08px currentColor;">dezembro de 2017</span>
<span id="dn0" class="t" style="left:827.5px;top:154px;font-size:8.9px;transform:scaleX(1.025);-webkit-text-stroke:0.08px currentColor;">dom</span>
<span id="dn1" class="t" style="left:852.0px;top:154px;font-size:8.9px;transform:scaleX(0.908);-webkit-text-stroke:0.08px currentColor;">seg</span>
<span id="dn2" class="t" style="left:876.5px;top:154px;font-size:8.9px;transform:scaleX(1.149);-webkit-text-stroke:0.08px currentColor;">ter</span>
<span id="dn3" class="t" style="left:897.0px;top:154px;font-size:8.9px;transform:scaleX(0.945);-webkit-text-stroke:0.08px currentColor;">qua</span>
<span id="dn4" class="t" style="left:921.0px;top:154px;font-size:8.9px;transform:scaleX(1.064);-webkit-text-stroke:0.08px currentColor;">qui</span>
<span id="dn5" class="t" style="left:943.6px;top:154px;font-size:8.9px;transform:scaleX(0.898);-webkit-text-stroke:0.08px currentColor;">sex</span>
<span id="dn6" class="t" style="left:965.6px;top:154px;font-size:8.9px;transform:scaleX(0.936);-webkit-text-stroke:0.08px currentColor;">sáb</span>
<span id="c00" class="t" style="left:832.3px;top:165px;font-size:9px;transform:scaleX(0.898);-webkit-text-stroke:0.08px currentColor;color:#767676;">26</span>
<span id="c01" class="t" style="left:855.4px;top:165px;font-size:9px;transform:scaleX(0.898);-webkit-text-stroke:0.08px currentColor;color:#767676;">27</span>
<span id="c02" class="t" style="left:877.8px;top:165px;font-size:9px;transform:scaleX(0.898);-webkit-text-stroke:0.08px currentColor;color:#767676;">28</span>
<span id="c03" class="t" style="left:900.6px;top:165px;font-size:9px;transform:scaleX(0.898);-webkit-text-stroke:0.08px currentColor;color:#767676;">29</span>
<span id="c04" class="t" style="left:923.0px;top:165px;font-size:9px;transform:scaleX(0.898);-webkit-text-stroke:0.08px currentColor;color:#767676;">30</span>
<span id="c05" class="t" style="left:950.3px;top:165px;font-size:9px;transform:scaleX(0.897);-webkit-text-stroke:0.08px currentColor;color:#101010;">1</span>
<span id="c06" class="t" style="left:973.3px;top:165px;font-size:9px;transform:scaleX(0.897);-webkit-text-stroke:0.08px currentColor;color:#101010;">2</span>
<span id="c10" class="t" style="left:836.8px;top:176px;font-size:9px;transform:scaleX(0.897);-webkit-text-stroke:0.08px currentColor;color:#101010;">3</span>
<span id="c11" class="t" style="left:859.9px;top:176px;font-size:9px;transform:scaleX(0.897);-webkit-text-stroke:0.08px currentColor;color:#101010;">4</span>
<span id="c12" class="t" style="left:882.3px;top:176px;font-size:9px;transform:scaleX(0.897);-webkit-text-stroke:0.08px currentColor;color:#101010;">5</span>
<span id="c13" class="t" style="left:905.1px;top:176px;font-size:9px;transform:scaleX(0.897);-webkit-text-stroke:0.08px currentColor;color:#101010;">6</span>
<span id="c14" class="t" style="left:927.5px;top:176px;font-size:9px;transform:scaleX(0.897);-webkit-text-stroke:0.08px currentColor;color:#101010;">7</span>
<span id="c15" class="t" style="left:950.3px;top:176px;font-size:9px;transform:scaleX(0.897);-webkit-text-stroke:0.08px currentColor;color:#101010;">8</span>
<span id="c16" class="t" style="left:973.3px;top:176px;font-size:9px;transform:scaleX(0.897);-webkit-text-stroke:0.08px currentColor;color:#101010;">9</span>
<span id="c20" class="t" style="left:832.3px;top:187px;font-size:9px;transform:scaleX(0.898);-webkit-text-stroke:0.08px currentColor;color:#101010;">10</span>
<span id="c21" class="t" style="left:855.4px;top:187px;font-size:9px;transform:scaleX(0.963);-webkit-text-stroke:0.08px currentColor;color:#101010;">11</span>
<span id="c22" class="t" style="left:877.8px;top:187px;font-size:9px;transform:scaleX(0.898);-webkit-text-stroke:0.08px currentColor;color:#101010;">12</span>
<span id="c23" class="t" style="left:900.6px;top:187px;font-size:9px;transform:scaleX(0.898);-webkit-text-stroke:0.08px currentColor;color:#101010;">13</span>
<span id="c24" class="t" style="left:923.0px;top:187px;font-size:9px;transform:scaleX(0.898);-webkit-text-stroke:0.08px currentColor;color:#101010;">14</span>
<span id="c25" class="t" style="left:945.8px;top:187px;font-size:9px;transform:scaleX(0.898);-webkit-text-stroke:0.08px currentColor;color:#101010;">15</span>
<span id="c26" class="t" style="left:968.8px;top:187px;font-size:9px;transform:scaleX(0.898);-webkit-text-stroke:0.08px currentColor;color:#101010;">16</span>
<span id="c30" class="t" style="left:832.3px;top:198px;font-size:9px;transform:scaleX(0.898);-webkit-text-stroke:0.08px currentColor;color:#101010;">17</span>
<span id="c31" class="t" style="left:855.4px;top:198px;font-size:9px;transform:scaleX(0.898);-webkit-text-stroke:0.08px currentColor;color:#101010;">18</span>
<span id="c32" class="t" style="left:877.8px;top:198px;font-size:9px;transform:scaleX(0.898);-webkit-text-stroke:0.08px currentColor;color:#101010;">19</span>
<span id="c33" class="t" style="left:900.6px;top:198px;font-size:9px;transform:scaleX(0.898);-webkit-text-stroke:0.08px currentColor;color:#101010;">20</span>
<span id="c34" class="t" style="left:923.0px;top:198px;font-size:9px;transform:scaleX(0.898);-webkit-text-stroke:0.08px currentColor;color:#101010;">21</span>
<span id="c35" class="t" style="left:945.8px;top:198px;font-size:9px;transform:scaleX(0.898);-webkit-text-stroke:0.08px currentColor;color:#101010;">22</span>
<span id="c36" class="t" style="left:968.8px;top:198px;font-size:9px;transform:scaleX(0.898);-webkit-text-stroke:0.08px currentColor;color:#101010;">23</span>
<span id="c40" class="t" style="left:832.3px;top:209px;font-size:9px;transform:scaleX(0.898);-webkit-text-stroke:0.08px currentColor;color:#101010;">24</span>
<span id="c41" class="t" style="left:855.4px;top:209px;font-size:9px;transform:scaleX(0.898);-webkit-text-stroke:0.08px currentColor;color:#101010;">25</span>
<span id="c42" class="t" style="left:877.8px;top:209px;font-size:9px;transform:scaleX(0.898);-webkit-text-stroke:0.08px currentColor;color:#101010;">26</span>
<span id="c43" class="t" style="left:900.6px;top:209px;font-size:9px;transform:scaleX(0.898);-webkit-text-stroke:0.08px currentColor;color:#101010;">27</span>
<span id="c44" class="t" style="left:923.0px;top:209px;font-size:9px;transform:scaleX(0.898);-webkit-text-stroke:0.08px currentColor;color:#101010;">28</span>
<span id="c45" class="t" style="left:945.8px;top:209px;font-size:9px;transform:scaleX(0.898);-webkit-text-stroke:0.08px currentColor;color:#101010;">29</span>
<span id="c46" class="t" style="left:968.8px;top:209px;font-size:9px;transform:scaleX(0.898);-webkit-text-stroke:0.08px currentColor;color:#101010;">30</span>
<span id="c50" class="t" style="left:832.3px;top:220px;font-size:9px;transform:scaleX(0.898);-webkit-text-stroke:0.08px currentColor;color:#101010;">31</span>
<span id="c51" class="t" style="left:859.9px;top:220px;font-size:9px;transform:scaleX(0.897);-webkit-text-stroke:0.08px currentColor;color:#767676;">1</span>
<span id="c52" class="t" style="left:882.3px;top:220px;font-size:9px;transform:scaleX(0.897);-webkit-text-stroke:0.08px currentColor;color:#767676;">2</span>
<span id="c53" class="t" style="left:905.1px;top:220px;font-size:9px;transform:scaleX(0.897);-webkit-text-stroke:0.08px currentColor;color:#767676;">3</span>
<span id="c54" class="t" style="left:927.5px;top:220px;font-size:9px;transform:scaleX(0.897);-webkit-text-stroke:0.08px currentColor;color:#767676;">4</span>
<span id="c55" class="t" style="left:950.3px;top:220px;font-size:9px;transform:scaleX(0.897);-webkit-text-stroke:0.08px currentColor;color:#767676;">5</span>
<span id="c56" class="t" style="left:973.3px;top:220px;font-size:9px;transform:scaleX(0.897);-webkit-text-stroke:0.08px currentColor;color:#767676;">6</span>
<span id="hoje" class="t" style="left:891.0px;top:231px;font-size:9px;transform:scaleX(0.939);-webkit-text-stroke:0.08px currentColor;">Hoje: 27/12/2017</span>
<span id="lesp" class="t" style="left:823.8px;top:272px;font-size:8.2px;transform:scaleX(0.939);color:#22224e;">Lista de Espera</span>
<span id="dot" class="t" style="left:887.4px;top:286px;font-size:8.2px;transform:scaleX(0.877);">.</span>
<span id="nome" class="t" style="left:855.5px;top:303px;font-size:8.2px;transform:scaleX(1.033);font-weight:bold;color:#111;">Nome</span>
<span id="cheg" class="t" style="left:936.0px;top:303px;font-size:8.2px;transform:scaleX(1.017);font-weight:bold;color:#111;">Chegou</span>
<span id="b1" class="t" style="left:894.0px;top:367px;font-size:8.3px;transform:scaleX(1.008);font-weight:bold;color:#111;"><u>P</u>esquisar</span>
<span id="b2" class="t" style="left:895.5px;top:385px;font-size:8.3px;transform:scaleX(1.058);font-weight:bold;color:#111;"><u>A</u>tualizar</span>
<span id="b3" class="t" style="left:877.7px;top:403px;font-size:8.3px;transform:scaleX(1.038);font-weight:bold;color:#111;"><u>E</u>nviar Lembretes</span>
<span id="b4" class="t" style="left:879.4px;top:421px;font-size:8.3px;transform:scaleX(1.016);font-weight:bold;color:#111;"><u>E</u>nviar por E-mail</span>
<span id="b5" class="t" style="left:895.4px;top:439px;font-size:8.3px;transform:scaleX(1.096);font-weight:bold;color:#111;"><u>I</u>mprimir</span>
<span id="tab1" class="t" style="left:11.0px;top:492px;font-size:10px;transform:scaleX(0.950);">Cadastro Status Agenda</span>
<span id="tab2" class="t" style="left:171.0px;top:492px;font-size:10px;transform:scaleX(0.928);">Agenda</span>
</body></html>
